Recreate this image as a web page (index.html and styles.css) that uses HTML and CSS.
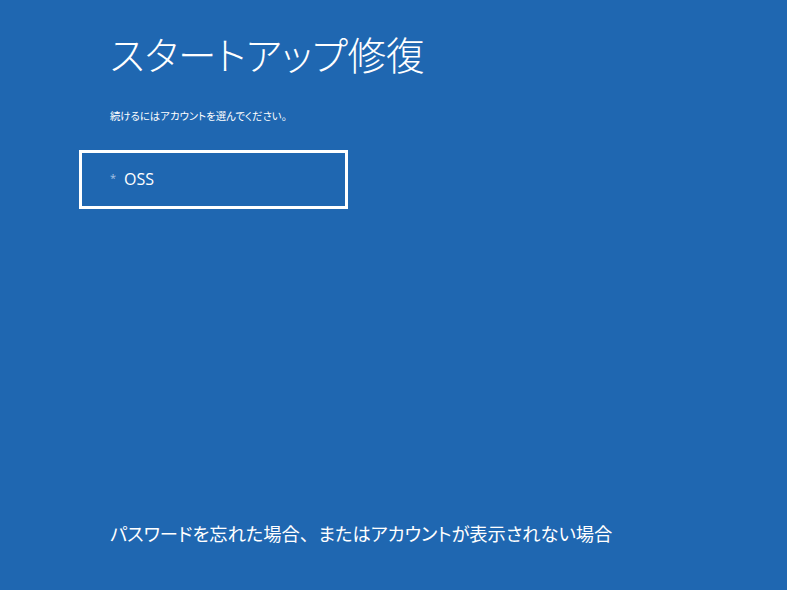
FILE: index.html
```html
<!DOCTYPE html>
<html lang="ja">
<head>
<meta charset="utf-8">
<title>スタートアップ修復</title>
<link rel="stylesheet" href="styles.css">
</head>
<body>
<main class="screen">
  <h1 class="title">スタートアップ修復</h1>
  <p class="subtitle">続けるにはアカウントを選んでください。</p>
  <div class="account">
    <span class="bullet">*</span>
    <span class="name">OSS</span>
  </div>
  <p class="footer-link">パスワードを忘れた場合<span class="comma">、</span>またはアカウントが表示されない場合</p>
</main>
</body>
</html>
```

FILE: styles.css
```css
html, body {
  margin: 0;
  padding: 0;
  background: #1f67b1;
}
.screen {
  box-sizing: border-box;
  height: 590px;
  width: 787px;
  display: flex;
  flex-direction: column;
  align-items: flex-start;
  padding: 34px 0 0 79px;
  color: #ffffff;
  font-family: "Noto Sans CJK JP", "Noto Sans", sans-serif;
  font-feature-settings: "palt";
}
.title {
  margin: 0 0 0 31px;
  font-size: 38.5px;
  font-weight: 300;
  line-height: 1;
}
.subtitle {
  margin: 38px 0 0 31px;
  font-size: 10.4px;
  line-height: 1;
}
.account {
  box-sizing: border-box;
  margin-top: 29px;
  width: 269px;
  height: 59px;
  border: 3px solid #ffffff;
  display: flex;
  align-items: center;
  padding-left: 28px;
  gap: 8px;
  font-family: "Open Sans", "Noto Sans", sans-serif;
}
.bullet {
  color: #a9c3e4;
  font-size: 11px;
  margin-top: -4px;
}
.name {
  font-size: 16px;
}
.footer-link {
  margin: auto 0 48px 31px;
  font-size: 18.3px;
  line-height: 1;
}
.comma {
  font-feature-settings: normal;
}
```
